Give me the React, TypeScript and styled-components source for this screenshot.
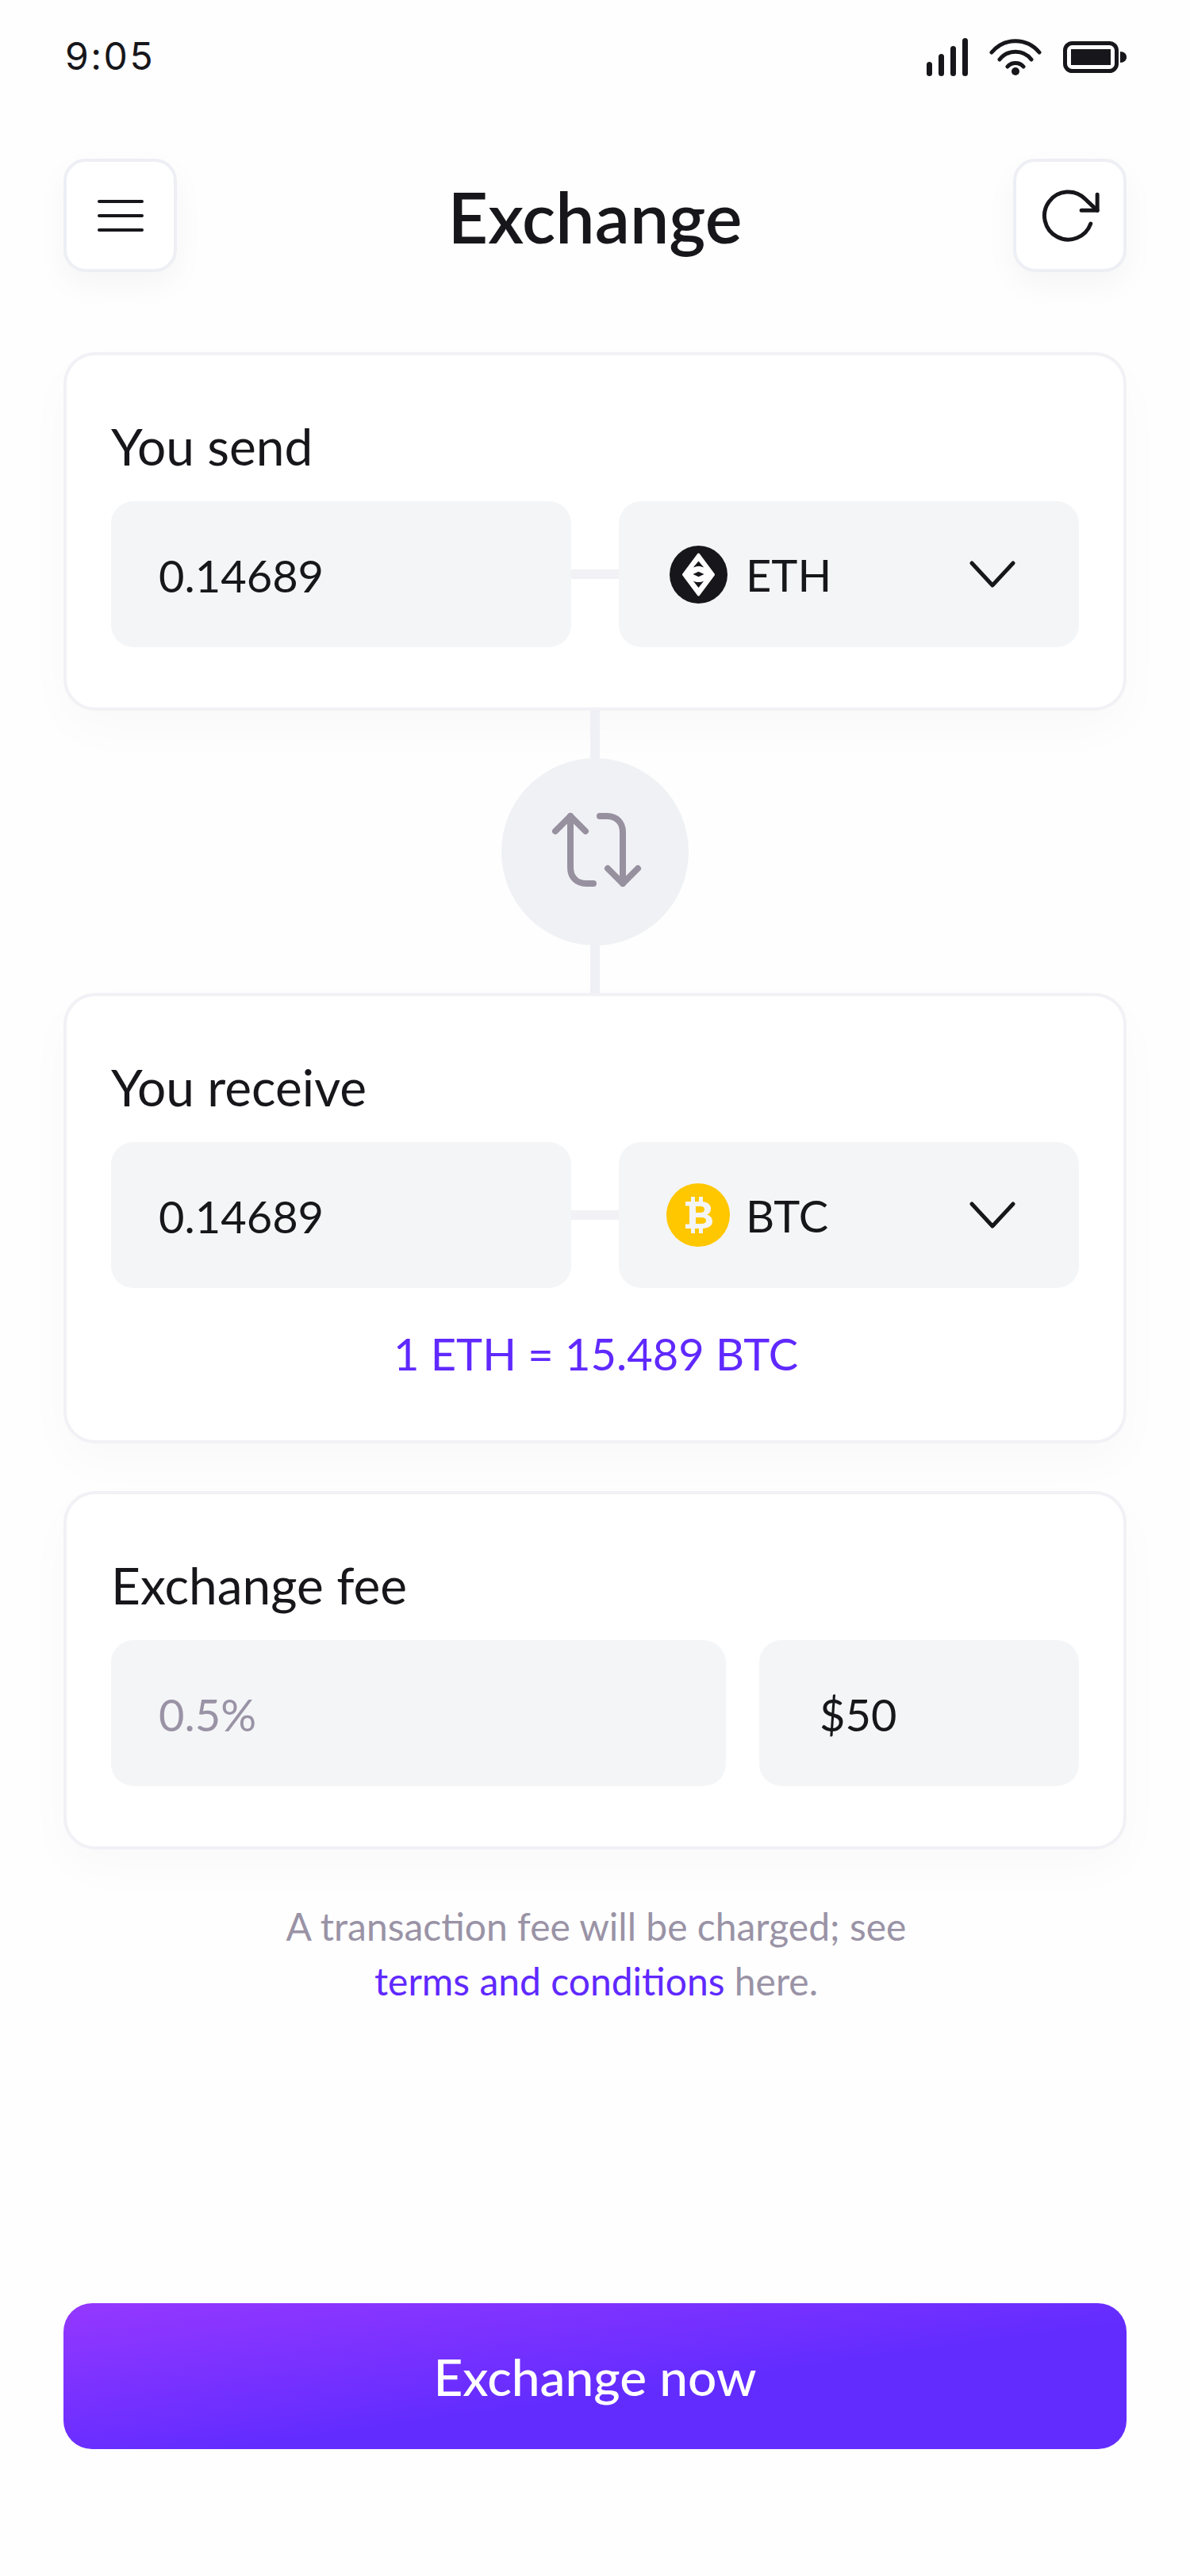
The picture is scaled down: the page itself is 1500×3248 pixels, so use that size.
import styled, { createGlobalStyle } from "styled-components";

const GlobalStyle = createGlobalStyle`
  * {
    box-sizing: border-box;
  }
  html,
  body {
    margin: 0;
    padding: 0;
    background: #fefefe;
  }
  body {
    font-family: "Lato", "Liberation Sans", sans-serif;
    color: #17171b;
  }
`;

const App = () => {
  return (
    <Screen>
      <GlobalStyle />
      <StatusBar>
        <Time>9:05</Time>
        <StatusIcons>
          <svg width="52" height="48" viewBox="0 0 52 48" fill="#17171b">
            <rect x="0" y="30" width="7" height="18" rx="3.5" />
            <rect x="15" y="20" width="7" height="28" rx="3.5" />
            <rect x="30" y="10" width="7" height="38" rx="3.5" />
            <rect x="45" y="0" width="7" height="48" rx="3.5" />
          </svg>
          <svg width="66" height="48" viewBox="0 0 66 48" fill="none" stroke="#17171b" strokeWidth="5" strokeLinecap="round">
            <path d="M3 18C19 -1 47 -1 63 18" />
            <path d="M13 27C23 14 43 14 53 27" />
            <path d="M23 36C28 30 38 30 43 36" />
            <circle cx="33" cy="42" r="5" fill="#17171b" stroke="none" />
          </svg>
          <svg width="80" height="40" viewBox="0 0 80 40" fill="#17171b">
            <rect x="2.5" y="2.5" width="65" height="35" rx="9" fill="none" stroke="#17171b" strokeWidth="5" />
            <rect x="10" y="10" width="50" height="20" />
            <path d="M72 13C77 13 80 16 80 20C80 24 77 27 72 27Z" />
          </svg>
        </StatusIcons>
      </StatusBar>

      <Header>
        <IconButton>
          <svg width="58" height="40" viewBox="0 0 58 40" fill="none" stroke="#17171b" strokeWidth="4" strokeLinecap="round">
            <path d="M2 2H56" />
            <path d="M2 20H56" />
            <path d="M2 38H56" />
          </svg>
        </IconButton>
        <Title>Exchange</Title>
        <IconButton>
          <svg width="80" height="80" viewBox="0.45 0 24 24" fill="none" stroke="#17171b" strokeWidth="1.5" strokeLinecap="round" strokeLinejoin="round">
            <polyline points="23 4 23 10 17 10" />
            <path d="M20.49 15a9 9 0 1 1-2.12-9.36L23 10" />
          </svg>
        </IconButton>
      </Header>

      <TopCard>
        <Label>You send</Label>
        <FieldRow>
          <Field>0.14689</Field>
          <Link />
          <CoinSelect>
            <CoinBadge>
              <svg width="73" height="73" viewBox="0 0 73 73">
                <circle cx="36.5" cy="36.5" r="36.5" fill="#17171b" />
                <path d="M36.5 11L55.5 36.5L36.5 62L17.5 36.5Z" fill="#fff" stroke="#fff" strokeWidth="3" strokeLinejoin="round" />
                <path d="M36.5 19.5L29.8 27.5C34 25.4 39 25.4 43.2 27.5Z" fill="#17171b" />
                <path d="M36.5 53L29.8 44.5C34 46.6 39 46.6 43.2 44.5Z" fill="#17171b" />
                <path d="M36.5 32.8L43.5 36L36.5 39.2L29.5 36Z" fill="#17171b" />
              </svg>
            </CoinBadge>
            <CoinName>ETH</CoinName>
            <Chevron />
          </CoinSelect>
        </FieldRow>
      </TopCard>

      <SwapArea>
        <SwapCircle>
          <svg width="236" height="236" viewBox="632 956 236 236" fill="none" stroke="#97909f" strokeWidth="8" strokeLinecap="round" strokeLinejoin="round">
            <path d="M719 1029V1094C719 1106 727 1114 739 1114H748" />
            <path d="M700 1048L719 1029L738 1048" />
            <path d="M756 1029H765C777 1029 785 1037 785 1049V1114" />
            <path d="M766 1095L785 1114L804 1095" />
          </svg>
        </SwapCircle>
      </SwapArea>

      <ReceiveCard>
        <Label>You receive</Label>
        <FieldRow>
          <Field>0.14689</Field>
          <Link />
          <CoinSelect>
            <CoinBadge>
              <svg width="80" height="80" viewBox="0 0 80 80">
                <circle cx="40" cy="40" r="40" fill="#ffc700" />
                <g fill="#f4f5f7">
                  <path
                    fillRule="evenodd"
                    d="M24 23H44C52 23 56 27 56 32C56 36 54 38.5 51 39.5C55 40.5 58 43.5 58 48C58 53.5 53 57 45 57H24V51.5H29V28.5H24ZM37 29V37H43C46 37 48 35.5 48 33C48 30.5 46 29 43 29ZM37 43V51H44C48 51 50 49.5 50 47C50 44.5 48 43 44 43Z"
                  />
                  <rect x="31" y="17" width="5" height="7" />
                  <rect x="41" y="17" width="5" height="7" />
                  <rect x="31" y="56" width="5" height="7" />
                  <rect x="41" y="56" width="5" height="7" />
                </g>
              </svg>
            </CoinBadge>
            <CoinName>BTC</CoinName>
            <Chevron />
          </CoinSelect>
        </FieldRow>
        <Rate>1 ETH = 15.489 BTC</Rate>
      </ReceiveCard>

      <FeeCard>
        <Label>Exchange fee</Label>
        <FeeRow>
          <FeeField $muted>0.5%</FeeField>
          <FeeField>$50</FeeField>
        </FeeRow>
      </FeeCard>

      <Note>
        A transaction fee will be charged; see
        <br />
        <a>terms and conditions</a> here.
      </Note>

      <PrimaryButton>Exchange now</PrimaryButton>
    </Screen>
  );
};

const Chevron = () => (
  <ChevronIcon width="58" height="36" viewBox="0 0 58 36" fill="none" stroke="#17171b" strokeWidth="5" strokeLinecap="round" strokeLinejoin="round">
    <path d="M3 4L29 32L55 4" />
  </ChevronIcon>
);

const Screen = styled.div`
  width: 1500px;
  height: 3248px;
  padding: 0 80px;
  overflow: hidden;
  background: #fefefe;
`;
const StatusBar = styled.div`
  height: 140px;
  display: flex;
  align-items: center;
  justify-content: space-between;
`;
const Time = styled.div`
  font-family: "Inter", sans-serif;
  font-size: 48px;
  letter-spacing: 2.5px;
  padding-left: 2px;
`;
const StatusIcons = styled.div`
  display: flex;
  align-items: center;
  gap: 27px;
  padding-top: 4px;
`;
const Header = styled.div`
  margin-top: 60px;
  height: 143px;
  display: flex;
  align-items: flex-start;
  justify-content: space-between;
`;
const IconButton = styled.div`
  width: 143px;
  height: 143px;
  display: flex;
  align-items: center;
  justify-content: center;
  background: #fff;
  border: 4px solid #eeeff4;
  border-radius: 28px;
  box-shadow: 0 16px 40px rgba(30, 30, 60, 0.04);
`;
const Title = styled.h1`
  margin: 4px 0 0;
  font-size: 88px;
  font-weight: 600;
  line-height: 139px;
`;
const Card = styled.div`
  padding: 83px 56px 76px;
  background: #fff;
  border: 4px solid #f1f1f6;
  border-radius: 40px;
  box-shadow: 0 24px 60px rgba(30, 30, 60, 0.025);
`;
const TopCard = styled(Card)`
  margin-top: 101px;
`;
const ReceiveCard = styled(Card)`
  padding-bottom: 78px;
`;
const FeeCard = styled(Card)`
  margin-top: 60px;
`;
const Label = styled.div`
  font-size: 64px;
  line-height: 64px;
  margin-bottom: 37px;
`;
const FieldRow = styled.div`
  display: flex;
  align-items: center;
`;
const Field = styled.div`
  width: 580px;
  height: 184px;
  display: flex;
  align-items: center;
  padding: 2px 0 0 60px;
  background: #f4f5f7;
  border-radius: 28px;
  font-size: 56px;
`;
const Link = styled.div`
  width: 60px;
  height: 12px;
  background: #f1f1f6;
`;
const CoinSelect = styled.div`
  width: 580px;
  height: 184px;
  display: flex;
  align-items: center;
  padding-left: 60px;
  background: #f4f5f7;
  border-radius: 28px;
`;
const CoinBadge = styled.div`
  width: 80px;
  height: 80px;
  display: flex;
  align-items: center;
  justify-content: center;
`;
const CoinName = styled.div`
  margin-left: 20px;
  font-size: 56px;
`;
const ChevronIcon = styled.svg`
  margin-left: auto;
  margin-right: 80px;
`;
const SwapArea = styled.div`
  position: relative;
  height: 356px;
  display: flex;
  align-items: center;
  justify-content: center;

  &::before {
    content: "";
    position: absolute;
    left: 50%;
    top: 0;
    bottom: 0;
    width: 12px;
    margin-left: -6px;
    background: #eff0f5;
  }
`;
const SwapCircle = styled.div`
  position: relative;
  width: 236px;
  height: 236px;
  background: #f0f1f5;
  border-radius: 50%;

  svg {
    display: block;
  }
`;
const Rate = styled.div`
  margin-top: 52px;
  text-align: center;
  color: #6029ff;
  font-size: 56px;
  line-height: 62px;
  padding-left: 2px;
`;
const FeeRow = styled.div`
  display: grid;
  grid-template-columns: 775px 403px;
  gap: 42px;
`;
const FeeField = styled.div<{ $muted?: boolean }>`
  height: 184px;
  display: flex;
  align-items: center;
  padding: 2px 0 0 ${(p) => (p.$muted ? "60px" : "76px")};
  background: #f4f5f7;
  border-radius: 28px;
  font-size: 56px;
  color: ${(p) => (p.$muted ? "#9a93a6" : "#17171b")};
`;
const Note = styled.div`
  margin-top: 62px;
  padding-left: 3px;
  text-align: center;
  font-size: 48px;
  line-height: 69px;
  color: #9a93a6;

  a {
    color: #6029ff;
  }
`;
const PrimaryButton = styled.div`
  margin-top: 372px;
  height: 184px;
  display: flex;
  align-items: center;
  justify-content: center;
  border-radius: 36px;
  color: #fff;
  font-size: 64px;
  font-weight: 500;
  background: linear-gradient(172deg, #9538ff 0%, #622cff 58%, #622cff 100%);
`;

export default App;
